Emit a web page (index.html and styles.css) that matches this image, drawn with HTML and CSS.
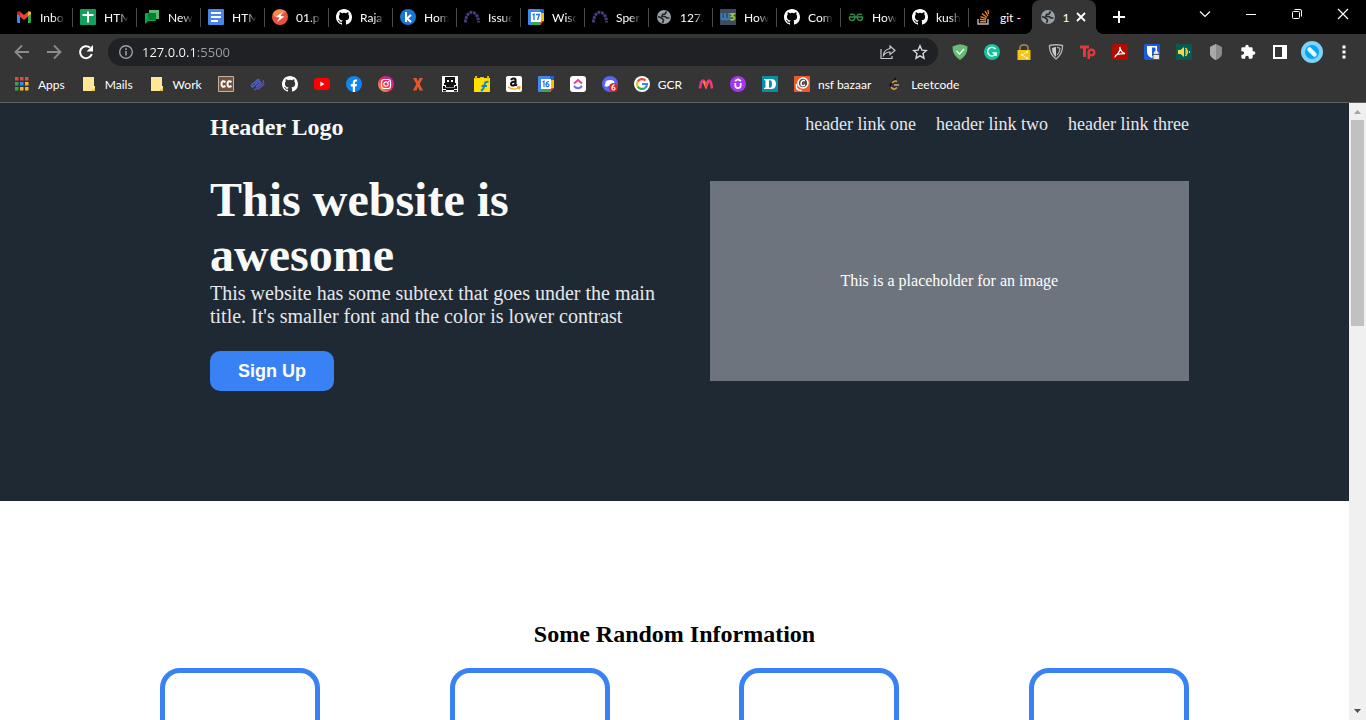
FILE: index.html
```html
<!DOCTYPE html>
<html lang="en">
<head>
<meta charset="utf-8">
<title>127.0.0.1:5500</title>
<link rel="stylesheet" href="styles.css">
</head>
<body>
<svg class="sprite" aria-hidden="true">
  <symbol id="github" viewBox="0 0 16 16"><path fill="#fff" d="M8 0C3.58 0 0 3.58 0 8c0 3.54 2.29 6.53 5.47 7.59.4.07.55-.17.55-.38v-1.49c-2.01.37-2.53-.49-2.69-.94-.09-.23-.48-.94-.82-1.13-.28-.15-.68-.52-.01-.53.63-.01 1.08.58 1.23.82.72 1.21 1.87.87 2.33.66.07-.52.28-.87.51-1.07-1.78-.2-3.64-.89-3.64-3.95 0-.87.31-1.59.82-2.15-.08-.2-.36-1.02.08-2.12 0 0 .67-.21 2.2.82a7.6 7.6 0 0 1 4 0c1.53-1.04 2.2-.82 2.2-.82.44 1.1.16 1.92.08 2.12.51.56.82 1.27.82 2.15 0 3.07-1.87 3.75-3.65 3.95.29.25.54.73.54 1.48v2.2c0 .21.15.46.55.38A8 8 0 0 0 16 8c0-4.42-3.58-8-8-8z"/></symbol>
  <symbol id="globe" viewBox="0 0 16 16"><circle cx="8" cy="8" r="7" fill="#9aa0a6"/><path fill="none" stroke="#26282a" stroke-width="1.700" d="M10.500 2.500L9 5 6.500 5.500 6 7.500h3l2 1.500h2.500M2 7.500l3.500 1.500 2 2-1 3"/></symbol>
  <symbol id="arc" viewBox="0 0 16 16"><path fill="none" stroke="#4b3a80" stroke-width="3" stroke-dasharray="2.800 .8" d="M1.500 13.500C1.500 0 14.500 0 14.500 13.500"/></symbol>
  <symbol id="folder" viewBox="0 0 16 16"><path fill="#ffe793" d="M2 1h11v9h1v5H2z"/><path fill="#f3c84c" d="M11 12h3v3h-3z"/><path fill="#fff0b5" d="M11 10h2v3h-2z"/></symbol>
  <symbol id="calendar" viewBox="0 0 16 16"><path fill="#4285f4" d="M0 1q0-1 1-1h11v3H3v13H1q-1 0-1-1z"/><path fill="#1967d2" d="M12 0h3q1 0 1 1v3h-4z"/><path fill="#fbbc04" d="M12 4h4v8h-4z"/><path fill="#34a853" d="M3 12h10v4H3z"/><path fill="#ea4335" d="M12 12h4l-4 4z"/><path fill="#fff" d="M3 3h10v10H3z"/></symbol>
</svg>

<div class="browser">
  <header class="tabstrip">
    <div class="tabs" role="tablist">
      <button class="tab" role="tab"><svg class="icon" viewBox="0 0 16 16"><path fill="#4285f4" d="M1 4l3 2v8H2q-1 0-1-1z"/><path fill="#34a853" d="M12 6l3-2v9q0 1-1 1h-2z"/><path fill="#ea4335" d="M3 2l5 4 5-4v5l-5 4-5-4z"/><path fill="#c5221f" d="M1 4q0-3 3-1v4L1 5z"/><path fill="#fbbc04" d="M15 4q0-3-3-1v4l3-2z"/></svg><span class="tab-label">Inbo</span></button>
      <button class="tab" role="tab"><svg class="icon" viewBox="0 0 16 16"><rect width="16" height="16" rx="1" fill="#12a05c"/><path fill="#fff" d="M2.500 5h11v2H9v6.500H7V7H2.500zM7 2.500h2V5H7z"/></svg><span class="tab-label">HTM</span></button>
      <button class="tab" role="tab"><svg class="icon" viewBox="0 0 16 16"><path fill="#5bb974" d="M5 1h10v9H5z"/><path fill="#00ac47" d="M1 5q0-1 1-1h2v6h8q0 2-1 2H4l-3 3z"/><path fill="#00832d" d="M4 4h8v7H4z"/></svg><span class="tab-label">New</span></button>
      <button class="tab" role="tab"><svg class="icon" viewBox="0 0 16 16"><rect width="16" height="16" rx="1" fill="#4a86e8"/><path stroke="#fff" stroke-width="2" d="M3 4h10M3 8h10M3 12h7"/></svg><span class="tab-label">HTM</span></button>
      <button class="tab" role="tab"><svg class="icon" viewBox="0 0 16 16"><circle cx="8" cy="8" r="8" fill="#e8523a"/><path fill="#f58a52" d="M1 5a8 8 0 0 1 13-2L3 8z"/><path fill="#fff" d="M11 3L3.500 8l4 .5L5 13l7.500-5.500-4-.5z"/></svg><span class="tab-label">01.p</span></button>
      <button class="tab" role="tab"><svg class="icon"><use href="#github"/></svg><span class="tab-label">Raja</span></button>
      <button class="tab" role="tab"><svg class="icon" viewBox="0 0 16 16"><circle cx="8" cy="8" r="8" fill="#1976d2"/><path fill="none" stroke="#fff" stroke-width="2" d="M6 3v10M11 6L7 9.500l4 3.500"/></svg><span class="tab-label">Hom</span></button>
      <button class="tab" role="tab"><svg class="icon"><use href="#arc"/></svg><span class="tab-label">Issue</span></button>
      <button class="tab" role="tab"><svg class="icon" viewBox="0 0 16 16"><use href="#calendar"/><path fill="none" stroke="#1a73e8" stroke-width="1.300" d="M4.500 6l1.500-.8V11M8 5.500h3.500L9.500 11"/></svg><span class="tab-label">Wisc</span></button>
      <button class="tab" role="tab"><svg class="icon"><use href="#arc"/></svg><span class="tab-label">Sper</span></button>
      <button class="tab" role="tab"><svg class="icon"><use href="#globe"/></svg><span class="tab-label">127.</span></button>
      <button class="tab" role="tab"><svg class="icon" viewBox="0 0 16 16"><path fill="#414a5c" d="M0 0h16v16H0z"/><path fill="none" stroke="#2f82c4" stroke-width="1.800" d="M1.500 4v4.500q0 2 1.500 2t2-1.500V4v5q.3 1.500 1.800 1.500t2-2V4"/><path fill="none" stroke="#9bc53d" stroke-width="1.700" d="M10 4.800h4l-2.500 2.500q3 0 3 1.700T12 10.800q-1.500 0-2-1"/></svg><span class="tab-label">How</span></button>
      <button class="tab" role="tab"><svg class="icon"><use href="#github"/></svg><span class="tab-label">Com</span></button>
      <button class="tab" role="tab"><svg class="icon" viewBox="0 0 16 16"><path fill="none" stroke="#2f8d46" stroke-width="1.400" d="M2 5.500q5-1.500 5 2.500 0 3.500-3 3.500T1.500 8h13q0 3.500-2.500 3.500T9 8q0-4 5-2.500"/></svg><span class="tab-label">How</span></button>
      <button class="tab" role="tab"><svg class="icon"><use href="#github"/></svg><span class="tab-label">kush</span></button>
      <button class="tab" role="tab"><svg class="icon" viewBox="0 0 16 16"><path fill="none" stroke="#bcbbbb" stroke-width="1.400" d="M2 10v5h10v-5"/><path stroke="#f48024" stroke-width="1.400" d="M4 12.700h6M4 10.300l6 .8M4.500 7.600l5.700 2M6 4.500l5 4M9 2l3 5M12 1l.6 4"/></svg><span class="tab-label tab-label-full">git -</span></button>
      <div class="tab tab-active"><svg class="icon"><use href="#globe"/></svg><button class="tab-title" role="tab" aria-selected="true">1</button><button class="tab-close" aria-label="Close tab"><svg class="glyph" viewBox="0 0 10 10"><path stroke="#fff" stroke-width="1.800" d="M1 1l8 8M9 1L1 9"/></svg></button></div>
    </div>
    <button class="new-tab" aria-label="New tab"><svg class="icon" viewBox="0 0 16 16"><path stroke="#fff" stroke-width="2" d="M8 2v12M2 8h12"/></svg></button>
    <div class="window-controls">
      <button class="window-button" aria-label="Search tabs"><svg class="icon" viewBox="0 0 16 16"><path fill="none" stroke="#fff" stroke-width="1.200" d="M3 5.500l5 5 5-5"/></svg></button>
      <button class="window-button" aria-label="Minimize"><svg class="icon" viewBox="0 0 16 16"><path stroke="#fff" d="M3 8.500h10"/></svg></button>
      <button class="window-button" aria-label="Restore"><svg class="icon" viewBox="0 0 16 16"><rect x="3.500" y="5.500" width="7" height="7" rx="1" fill="none" stroke="#fff"/><path fill="none" stroke="#fff" d="M5.500 3.500H11q1.500 0 1.500 1.500v5.500"/></svg></button>
      <button class="window-button" aria-label="Close"><svg class="icon" viewBox="0 0 16 16"><path stroke="#fff" stroke-width="1.200" d="M3 3l10 10M13 3L3 13"/></svg></button>
    </div>
  </header>

  <div class="toolbar">
    <button class="tool" aria-label="Back"><svg class="icon" viewBox="0 0 16 16"><path fill="none" stroke="#8b8c8d" stroke-width="1.800" d="M15 8H2M8 1.500L1.500 8 8 14.500"/></svg></button>
    <button class="tool" aria-label="Forward"><svg class="icon" viewBox="0 0 16 16"><path fill="none" stroke="#8b8c8d" stroke-width="1.800" d="M1 8h13M8 1.500L14.500 8 8 14.500"/></svg></button>
    <button class="tool" aria-label="Reload"><svg class="icon" viewBox="0 0 16 16"><path fill="none" stroke="#fff" stroke-width="2" d="M13.800 10A6 6 0 1 1 12 3.600"/><path fill="#fff" d="M15 1v6.500H8.500z"/></svg></button>
    <div class="address">
      <svg class="icon" viewBox="0 0 16 16"><circle cx="8" cy="8" r="6.300" fill="none" stroke="#9aa0a6" stroke-width="1.400"/><path stroke="#9aa0a6" stroke-width="1.600" d="M8 7v4.500M8 4.300v1.600"/></svg>
      <input class="address-input" type="text" value="127.0.0.1:5500" aria-label="Address">
      <button class="address-button" aria-label="Share"><svg class="icon" viewBox="0 0 16 16"><path fill="none" stroke="#c4c7ca" stroke-width="1.200" d="M1 5v9.500h11V12M10 2l5 4.500-5 4V8Q6 8 3.500 11.500 4 5.500 10 4.500z"/></svg></button>
      <button class="address-button" aria-label="Bookmark"><svg class="icon" viewBox="0 0 16 16"><path fill="none" stroke="#d5d7d9" stroke-width="1.400" d="M8 1.800l1.900 4.300 4.600.4-3.500 3.100 1 4.600L8 11.800l-4 2.400 1-4.600-3.500-3.100 4.600-.4z"/></svg></button>
    </div>
    <button class="tool" aria-label="Ad blocker"><svg class="icon" viewBox="0 0 16 16"><path fill="#68bc71" d="M.5 2.500Q5 .5 8 .2q4 .3 7.500 2.300.3 9-7.500 13.500Q.2 11.500.5 2.500z"/><path fill="none" stroke="#fff" stroke-width="1.400" d="M4.500 7l3 3L12 5"/></svg></button>
    <button class="tool" aria-label="Grammar"><svg class="icon" viewBox="0 0 16 16"><circle cx="8" cy="8" r="8" fill="#15c39a"/><path fill="none" stroke="#fff" stroke-width="1.500" d="M11.500 5.200A4.300 4.300 0 1 0 12 9H8.500M12 9v3"/></svg></button>
    <button class="tool" aria-label="Lock"><svg class="icon" viewBox="0 0 16 16"><path fill="none" stroke="#96815a" stroke-width="1.700" d="M4 6V4q0-3.200 4-3.200T12 4v2"/><path fill="#f5c518" d="M1.500 6h13v10h-13z"/><path fill="none" stroke="#fff2b0" d="M11 8l-5 3 5 3"/><path fill="#fff2b0" d="M10 7h2v2h-2zM5 10h2v2H5zM10 13h2v2h-2z"/></svg></button>
    <button class="tool" aria-label="Privacy"><svg class="icon" viewBox="0 0 16 16"><path fill="none" stroke="#b4b4b4" stroke-width="1.300" d="M1.500 1.500Q8 0 14.500 1.500q.5 8-6.500 13.500-7-5.500-6.500-13.500z"/><path fill="#ccc" d="M4 4q4-1.500 4-1V13Q4 10 4 4z"/><path fill="none" stroke="#ccc" d="M9 3.500l3 .7q0 4-3 7"/></svg></button>
    <button class="tool" aria-label="Text tool"><svg class="icon" viewBox="0 0 16 16"><path fill="none" stroke="#e03b3b" stroke-width="3" d="M0 3h9M4.500 3v10"/><circle cx="11.500" cy="8.500" r="2.800" fill="none" stroke="#e03b3b" stroke-width="2.200"/><path stroke="#e03b3b" stroke-width="2.500" d="M8.800 7v8"/></svg></button>
    <button class="tool" aria-label="PDF"><svg class="icon" viewBox="0 0 16 16"><rect width="16" height="16" rx="2" fill="#b30b00"/><path fill="none" stroke="#fff" stroke-width="1.300" d="M7.700 3q1.500 4-4.500 9.500Q3 10 13 9.500 9 9 7.700 3z"/></svg></button>
    <button class="tool" aria-label="Passwords"><svg class="icon" viewBox="0 0 16 16"><rect width="16" height="16" rx="2" fill="#175ddc"/><path fill="#fff" d="M3 2h10v6q0 4-5 6-5-2-5-6z"/><path fill="#175ddc" d="M8 3.500h3.500V8q0 3-3.500 4.300z"/><path fill="#e6e6e6" stroke="#444" stroke-width=".8" d="M9 10.500h6.500v5H9z"/><path fill="none" stroke="#eee" stroke-width="1.200" d="M10.500 10V8.500q1.700-1.800 3.400 0V10"/></svg></button>
    <button class="tool" aria-label="Volume"><svg class="icon" viewBox="0 0 16 16"><rect width="16" height="16" rx="1" fill="#075c50"/><path fill="#f2d750" d="M2 6h2.500L8 3v10l-3.500-3H2z"/><path fill="none" stroke="#f2d750" stroke-width="1.500" d="M9.500 4q3.500 4 0 8"/><path stroke="#f2d750" d="M10 6v4M13.500 7v2"/></svg></button>
    <button class="tool" aria-label="Shield"><svg class="icon" viewBox="0 0 16 16"><path fill="#8c8c8c" d="M8 0l6 3v7q-1 4-6 6-5-2-6-6V3z"/><path fill="#a9a9a9" d="M8 0v16q-5-2-6-6V3z"/></svg></button>
    <button class="tool" aria-label="Extensions"><svg class="icon" viewBox="0 0 24 24"><path fill="#fff" d="M20.500 11H19V7a2 2 0 0 0-2-2h-4V3.500a2.500 2.500 0 0 0-5 0V5H4a2 2 0 0 0-2 2v3.800h1.500a2.700 2.700 0 0 1 0 5.400H2V20a2 2 0 0 0 2 2h3.800v-1.500a2.700 2.700 0 0 1 5.400 0V22H17a2 2 0 0 0 2-2v-4h1.500a2.500 2.500 0 0 0 0-5z"/></svg></button>
    <button class="tool" aria-label="Side panel"><svg class="icon" viewBox="0 0 16 16"><path fill="#fff" fill-rule="evenodd" d="M1 1h14v14H1zM3 3v10h7V3z"/></svg></button>
    <button class="tool" aria-label="Profile"><svg class="avatar" viewBox="0 0 22 22"><circle cx="11" cy="11" r="11" fill="#7fd3fa"/><circle cx="11" cy="11" r="7" fill="#08a4f5"/><path stroke="#e9f8ff" stroke-width="4.500" stroke-linecap="round" d="M8.500 8.500l5 5"/></svg></button>
    <button class="tool" aria-label="Menu"><svg class="icon" viewBox="0 0 16 16"><path fill="#fff" d="M6.500 1.500h3v3h-3zM6.500 6.500h3v3h-3zM6.500 11.500h3v3h-3z"/></svg></button>
  </div>

  <nav class="bookmarks" aria-label="Bookmarks">
    <a class="bookmark" href="#"><svg class="icon" viewBox="0 0 16 16"><path fill="#e04a3f" d="M1 1h3.500v3.500H1zM6 1h3.500v3.500H6zM11 1h3.500v3.500H11z"/><path fill="#2da65a" d="M1 6h3.500v3.500H1zM1 11h3.500v3.500H1z"/><path fill="#3f86ee" d="M6 6h3.500v3.500H6z"/><path fill="#f2b52e" d="M11 6h3.500v3.500H11zM6 11h3.500v3.500H6zM11 11h3.500v3.500H11z"/></svg>Apps</a>
    <a class="bookmark" href="#"><svg class="icon"><use href="#folder"/></svg>Mails</a>
    <a class="bookmark" href="#"><svg class="icon"><use href="#folder"/></svg>Work</a>
    <a class="bookmark" href="#" aria-label="CC"><svg class="icon" viewBox="0 0 16 16"><path fill="#75543f" stroke="#c2b2a5" d="M.5.5h15v15H.5z"/><path fill="none" stroke="#fff" stroke-width="2" d="M7.500 6Q3.500 4 3.500 8t4 2M13.500 6q-4-2-4 2t4 2"/></svg></a>
    <a class="bookmark" href="#" aria-label="Scribble"><svg class="icon" viewBox="0 0 16 16"><g fill="none" stroke-width="1.300"><path stroke="#4a6bd0" d="M8.500 3L2 8.500q-1.500 2 .5 2.500L9 5.500q2-.5 1.500 1.500L6 11"/><path stroke="#5a4fb8" d="M5 8l5-4.500M5 12.500q-1 1 .5 1L13 7q1.500-2-.5-2.500M8 13.500L14.500 8"/></g></svg></a>
    <a class="bookmark" href="#" aria-label="GitHub"><svg class="icon"><use href="#github"/></svg></a>
    <a class="bookmark" href="#" aria-label="YouTube"><svg class="icon" viewBox="0 0 16 16"><rect y="2" width="16" height="12" rx="3" fill="#f00"/><path fill="#fff" d="M6.300 5.500L10.500 8l-4.200 2.500z"/></svg></a>
    <a class="bookmark" href="#" aria-label="Facebook"><svg class="icon" viewBox="0 0 16 16"><circle cx="8" cy="8" r="8" fill="#0d86f0"/><path fill="#fff" d="M6.800 16v-5.500h-2V8h2V6.500Q6.800 3 11 3.500v2H10q-1 0-1 1V8h2l-.4 2.500H9V16z"/></svg></a>
    <a class="bookmark" href="#" aria-label="Instagram"><svg class="icon" viewBox="0 0 16 16"><defs><linearGradient id="sunset" x1="0" y1="1" x2="1" y2="0"><stop offset="0" stop-color="#ffc83c"/><stop offset=".5" stop-color="#f4264f"/><stop offset="1" stop-color="#9b24d0"/></linearGradient></defs><circle cx="8" cy="8" r="8" fill="url(#sunset)"/><rect x="3.500" y="3.500" width="9" height="9" rx="2.500" fill="none" stroke="#fff" stroke-width="1.200"/><circle cx="8" cy="8" r="2.200" fill="none" stroke="#fff" stroke-width="1.200"/><path fill="#fff" d="M10 5h1.300v1H10z"/></svg></a>
    <a class="bookmark" href="#" aria-label="X"><svg class="icon" viewBox="0 0 16 16"><path fill="#e8572b" d="M3 2h3.500L8 5.500 9.500 2H13l-3.300 6 3.300 6.500H9.500L8 10.500l-1.500 4H3L6.300 8z"/></svg></a>
    <a class="bookmark" href="#" aria-label="Pirate"><svg class="icon" viewBox="0 0 16 16"><path fill="#fff" d="M0 0h16v16H0z"/><path fill="#111" d="M3 1h10v6h1v2H2V7h1zM4 9h8v2H4zM1 10h2v1.500h10V10h2v3h-3v1h3v1.500h-3V14H4v1.500H1V14h3v-1H1z"/><path fill="#fff" d="M5 4h2v2H5zM9 4h2v2H9z"/></svg></a>
    <a class="bookmark" href="#" aria-label="Flipkart"><svg class="icon" viewBox="0 0 16 16"><path fill="#ffe000" d="M0 2h16v14H0z"/><path fill="#f2b400" d="M1 0h2v3H1zM6 1h4v1H6zM13 0h2v3h-2z"/><path fill="none" stroke="#1686c4" stroke-width="2" d="M14.500 6q-3.500-1-4 3T7 15M7.500 10H13"/></svg></a>
    <a class="bookmark" href="#" aria-label="Amazon"><svg class="icon" viewBox="0 0 16 16"><rect width="16" height="16" rx="2" fill="#fff"/><path fill="none" stroke="#111" stroke-width="2" d="M5 4q1-2 3-1.500T9.500 5v3.500l1.500 1M9.500 5.500Q5 5.500 5 8q.3 2 2.500 1.500t2-3"/><path fill="none" stroke="#f90" stroke-width="1.300" d="M2 11q6 4 11.500.5M11 11h3l-.8 2.500"/></svg></a>
    <a class="bookmark" href="#" aria-label="Calendar"><svg class="icon" viewBox="0 0 16 16"><use href="#calendar"/><path fill="none" stroke="#1a73e8" stroke-width="1.200" d="M4.500 6l1.500-.8V11M11 5.500q-3 0-3 3.500 0 1.700 1.500 1.700T11 9.200 9.500 7.800 8 9"/></svg></a>
    <a class="bookmark" href="#" aria-label="ClickUp"><svg class="icon" viewBox="0 0 16 16"><rect width="16" height="16" rx="3" fill="#fff"/><path fill="none" stroke="#e93d91" stroke-width="2" d="M4 7.500L8 4l4 3.500"/><path fill="none" stroke="#6a6cf6" stroke-width="2" d="M4 10q4 4.500 8 0"/></svg></a>
    <a class="bookmark" href="#" aria-label="Discord"><svg class="icon" viewBox="0 0 16 16"><circle cx="8" cy="8" r="8" fill="#5865f2"/><path fill="#fff" d="M4 5q4-2 8 0l1.500 5-2.500 1-1-1H6l-1 1-2.500-1z"/><circle cx="11.500" cy="11.500" r="4.500" fill="#d8232a"/><path fill="none" stroke="#fff" stroke-width="1.200" d="M12.500 8.700q-2.500.5-2.500 3T11.500 14t1.500-1.500-1.500-1.500-1.500 1.300"/></svg></a>
    <a class="bookmark" href="#"><svg class="icon" viewBox="0 0 16 16"><circle cx="8" cy="8" r="8" fill="#fff"/><g fill="none" stroke-width="2.200"><path stroke="#ea4335" d="M3.700 5.500A5 5 0 0 1 11.500 4.500"/><path stroke="#fbbc05" d="M3.700 5.500a5 5 0 0 0 0 5"/><path stroke="#34a853" d="M3.700 10.500a5 5 0 0 0 7.500 1.300"/><path stroke="#4285f4" d="M11.200 11.800Q13 10.500 13 8H8"/></g></svg>GCR</a>
    <a class="bookmark" href="#" aria-label="Myntra"><svg class="icon" viewBox="0 0 16 16"><path fill="none" stroke="#e5358b" stroke-width="2.600" d="M2 12.500Q3 4 5 4.500t3 6.500"/><path fill="none" stroke="#f58a1f" stroke-width="2.200" d="M5.500 5L8 11l2.500-6"/><path fill="none" stroke="#f0387a" stroke-width="2.600" d="M8 11q1-6 3-6.500t3 8"/></svg></a>
    <a class="bookmark" href="#" aria-label="Udemy"><svg class="icon" viewBox="0 0 16 16"><circle cx="8" cy="8" r="8" fill="#a435f0"/><path fill="none" stroke="#fff" stroke-width="1.800" d="M5.300 7v2.500q0 2.500 2.700 2.500t2.700-2.500V7M5 5l3-1.700L11 5"/></svg></a>
    <a class="bookmark" href="#" aria-label="D"><svg class="icon" viewBox="0 0 16 16"><path fill="#0a8ea5" d="M0 0h16v16H0z"/><path fill="#fff" fill-rule="evenodd" d="M2 3h7q5 0 5 5t-5 5H2v-1l1.500-.5v-7L2 4zM7 4.500v7q3 1 3-3.500T7 4.500z"/></svg></a>
    <a class="bookmark" href="#"><svg class="icon" viewBox="0 0 16 16"><path fill="#ed5a29" d="M0 0h16v16H0z"/><circle cx="9" cy="7" r="5" fill="#55504d" stroke="#fff" stroke-width="1.500"/><path fill="none" stroke="#fff" stroke-width="1.500" d="M11 4.500Q7 4 7 7.500t4 1.500M2.500 8v3q0 3 5 3.500"/></svg>nsf bazaar</a>
    <a class="bookmark" href="#"><svg class="icon" viewBox="0 0 16 16"><path fill="none" stroke="#111" stroke-width="1.600" d="M9 2L4 7.500q-1.500 2 0 3.500"/><path fill="none" stroke="#e89c2c" stroke-width="1.600" d="M10 5.500Q7.500 4 5 7M4 11q2.500 4 6 .5"/><path stroke="#b3b3b3" stroke-width="1.400" d="M7 9h5"/></svg>Leetcode</a>
  </nav>

  <div class="viewport">
    <div class="page">
      <section class="hero">
        <header class="site-header">
          <div class="logo">Header Logo</div>
          <nav class="site-links">
            <a class="site-link" href="#">header link one</a>
            <a class="site-link" href="#">header link two</a>
            <a class="site-link" href="#">header link three</a>
          </nav>
        </header>
        <div class="hero-body">
          <div class="hero-copy">
            <h1 class="hero-title">This website is awesome</h1>
            <p class="hero-text">This website has some subtext that goes under the main title. It's smaller font and the color is lower contrast</p>
            <button class="signup">Sign Up</button>
          </div>
          <div class="placeholder">This is a placeholder for an image</div>
        </div>
      </section>
      <section class="info">
        <h2 class="info-title">Some Random Information</h2>
        <div class="cards">
          <div class="card"></div>
          <div class="card"></div>
          <div class="card"></div>
          <div class="card"></div>
        </div>
      </section>
    </div>
    <div class="scrollbar" aria-hidden="true">
      <svg class="scroll-arrow" viewBox="0 0 17 17"><path fill="#a3a3a3" d="M5 11h7L8.500 7z"/></svg>
      <div class="scroll-track"><div class="scroll-thumb"></div></div>
      <svg class="scroll-arrow" viewBox="0 0 17 17"><path fill="#505050" d="M5 6h7l-3.500 4z"/></svg>
    </div>
  </div>
</div>
</body>
</html>
```
FILE: styles.css
```css
* { box-sizing: border-box; }

body {
  margin: 0;
  font-family: "Liberation Serif", "Times New Roman", serif;
  background: #fff;
}

button {
  margin: 0;
  padding: 0;
  border: 0;
  background: none;
  color: inherit;
  font: inherit;
}

a { color: inherit; text-decoration: none; }

.sprite { display: none; }
.icon { flex: none; display: block; width: 16px; height: 16px; }
.glyph { display: block; width: 10px; height: 10px; }
.avatar { display: block; width: 22px; height: 22px; }

.browser {
  display: flex;
  flex-direction: column;
  height: 100vh;
  overflow: hidden;
}

/* Tab strip */
.tabstrip,
.toolbar,
.bookmarks {
  flex: none;
  display: flex;
  font-family: Lato, "Open Sans", sans-serif;
  font-size: 12px;
  color: #fff;
}

.tabstrip { height: 34px; padding-left: 8px; background: #000; }
.tabs { display: flex; }

.tab {
  position: relative;
  display: flex;
  align-items: center;
  gap: 8px;
  width: 64px;
  padding: 0 7px 0 8px;
  text-align: left;
}

.tab:not(.tab-active)::after {
  content: "";
  position: absolute;
  right: -1px;
  top: 8px;
  width: 1px;
  height: 19px;
  background: #4a4a4a;
}

.tab:nth-last-child(2)::after { visibility: hidden; }

.tab-label {
  flex: 1;
  overflow: hidden;
  white-space: nowrap;
  mask-image: linear-gradient(90deg, #000 55%, transparent);
}

.tab-label-full { mask-image: none; }

.tab-active { background: #353535; border-radius: 8px 8px 0 0; gap: 4px; }
.tab-title { width: 12px; }

.tab-active::before,
.tab-active::after {
  content: "";
  position: absolute;
  bottom: 0;
  width: 8px;
  height: 8px;
}

.tab-active::before {
  right: 100%;
  background: radial-gradient(circle at 0 0, transparent 8px, #353535 8px);
}

.tab-active::after {
  left: 100%;
  background: radial-gradient(circle at 100% 0, transparent 8px, #353535 8px);
}

.new-tab { display: grid; place-items: center; width: 46px; }
.window-controls { display: flex; margin-left: auto; }
.window-button { display: grid; place-items: center; width: 46px; height: 28px; }

/* Toolbar */
.toolbar { height: 36px; padding: 0 6px; align-items: center; background: #353535; }
.tool { flex: none; display: grid; place-items: center; width: 32px; height: 32px; }

.address {
  flex: 1;
  display: flex;
  align-items: center;
  gap: 8px;
  height: 28px;
  margin: 0 6px 0 6px;
  padding: 0 10px;
  border-radius: 14px;
  background: #202124;
}

.address-input {
  flex: 1;
  min-width: 0;
  padding: 0;
  border: 0;
  outline: 0;
  font-family: "Open Sans", "Noto Sans", sans-serif;
  font-size: 13px;
  color: transparent;
  background: linear-gradient(90deg, #fff 53px, #9aa0a6 53px);
  background-clip: text;
  -webkit-background-clip: text;
}

.address-button { padding: 0 0 0 8px; }

/* Bookmarks bar */
.bookmarks {
  height: 33px;
  padding: 0 14px 4px;
  gap: 16px;
  align-items: center;
  background: #353535;
  border-bottom: 1px solid #5f6063;
}

.bookmark { display: flex; align-items: center; gap: 8px; white-space: nowrap; }

/* Page */
.viewport { flex: 1; display: flex; min-height: 0; }
.page { flex: 1; overflow: hidden; background: #fff; }

.hero { padding: 11px 160px 110px 210px; background: #1f2933; color: #f9faf8; }

.site-header { display: flex; justify-content: space-between; align-items: flex-start; }
.logo { font-size: 24px; line-height: 27px; font-weight: bold; }
.site-links { display: flex; gap: 20px; font-size: 18px; line-height: 21px; color: #e5e7eb; }

.hero-body { display: flex; align-items: center; gap: 20px; margin-top: 30px; }
.hero-copy { flex: 1; padding-top: 1px; }
.hero-title { margin: 0; font-size: 48px; line-height: 55px; }
.hero-text { margin: 0 0 23px; font-size: 20px; line-height: 23px; color: #e5e7eb; }

.signup {
  display: block;
  padding: 0 28px;
  border-radius: 10px;
  background: #3882f6;
  color: #fff;
  font-family: "Liberation Sans", Arial, sans-serif;
  font-size: 18px;
  font-weight: bold;
  line-height: 40px;
}

.placeholder {
  flex: 1;
  display: grid;
  place-items: center;
  height: 200px;
  background: #6d747d;
  color: #fff;
  font-size: 16px;
}

.info { padding: 120px 160px 0; }
.info-title { margin: 0 0 20px; font-size: 24px; line-height: 27px; text-align: center; color: #000; }
.cards { display: flex; justify-content: space-between; }
.card { width: 160px; height: 160px; border: 5px solid #3882f6; border-radius: 20px; }

/* Scrollbar */
.scrollbar { flex: none; display: flex; flex-direction: column; width: 17px; background: #f0f0f0; }
.scroll-arrow { flex: none; display: block; width: 17px; height: 17px; }
.scroll-track { flex: 1; padding: 0 2px; }
.scroll-thumb { height: 206px; background: #c1c1c1; }
```
